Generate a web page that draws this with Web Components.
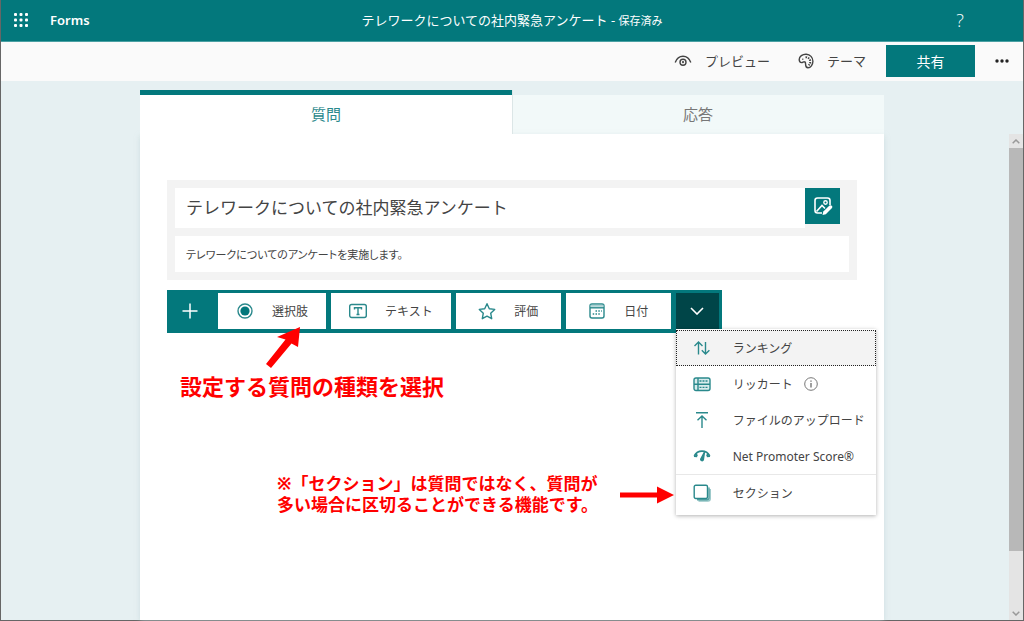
<!DOCTYPE html>
<html lang="ja">
<head>
<meta charset="utf-8">
<title>Forms</title>
<style>
  html, body { margin: 0; }
  body {
    --teal: #03787c;
    --teal-dark: #004548;
    --icon: #2a898c;
    --panel: #f3f3f3;
    --note: #ff0000;
    font-family: "Noto Sans", "Noto Sans CJK JP", sans-serif;
    font-size: 12px;
    color: #444;
  }
</style>
</head>
<body>
<forms-app>
  <app-header slot="header" name="Forms" state="保存済み">テレワークについての社内緊急アンケート</app-header>
  <command-bar slot="commands"></command-bar>
  <form-tabs slot="tabs"></form-tabs>
  <form-title slot="content" heading="テレワークについての社内緊急アンケート" description="テレワークについてのアンケートを実施します。"></form-title>
  <question-bar slot="content">
    <type-button icon="choice">選択肢</type-button>
    <type-button icon="text">テキスト</type-button>
    <type-button icon="star">評価</type-button>
    <type-button icon="date">日付</type-button>
    <type-menu slot="more">
      <menu-item icon="rank" current>ランキング</menu-item>
      <menu-item icon="likert" info>リッカート</menu-item>
      <menu-item icon="upload">ファイルのアップロード</menu-item>
      <menu-item icon="nps">Net Promoter Score®</menu-item>
      <menu-item icon="section" divided>セクション</menu-item>
    </type-menu>
  </question-bar>
  <note-heading slot="content">設定する質問の種類を選択</note-heading>
  <note-pointer slot="content">※「セクション」は質問ではなく、質問が<br>多い場合に区切ることができる機能です。</note-pointer>
  <scroll-bar slot="scroll"></scroll-bar>
</forms-app>

<script>
const svg = (w, h, body) =>
  `<svg width="${w}" height="${h}" viewBox="0 0 ${w} ${h}" fill="none" stroke="currentColor" stroke-width="1.4" aria-hidden="true">${body}</svg>`;

const ICONS = {
  waffle: svg(14, 14, [0, 5.5, 11].map(y => [0, 5.5, 11].map(x =>
    `<rect x="${x}" y="${y}" width="3" height="3" rx="1" fill="currentColor" stroke="none"/>`).join('')).join('')),
  eye: svg(18, 16, '<path d="M1.200 9.500C2.700 5.300 5.500 3.200 9 3.200S15.300 5.300 16.800 9.500"/><circle cx="9" cy="9.200" r="3"/><circle cx="9" cy="9.200" r=".4"/>'),
  palette: svg(16, 16, '<path d="M8.300 1.200C4.500 1 1.200 3.500 1.200 6.600c0 1.900 1 3 2.400 3 1.200 0 1.800-.9 2.700-.8 1.300.1 1.300 1.300 1.300 2.500 0 2 .8 3.500 2.400 3.500 2.600 0 4.900-3.100 4.900-6.500 0-3.900-2.800-6.900-6.600-7.100Z"/><path d="M7.500 4.200c2.500 0 4.200 1.300 4.700 3.600.3 1.700-.3 3.200-1.500 4.400" stroke-width="2" stroke-dasharray="1.500 1"/><path d="M4.300 6.200h1" stroke-width="1.600"/>'),
  dots: svg(14, 6, '<g fill="currentColor" stroke="none"><circle cx="2" cy="3" r="1.700"/><circle cx="7" cy="3" r="1.700"/><circle cx="12" cy="3" r="1.700"/></g>'),
  plus: svg(16, 16, '<path d="M8 .5v15M.5 8h15" stroke-width="1.500"/>'),
  chevron: svg(14, 8, '<path d="M1 1l6 6 6-6" stroke-width="1.600"/>'),
  up: svg(8, 5, '<path d="M.7 4.300L4 1l3.300 3.300" stroke-width="1.500"/>'),
  down: svg(8, 5, '<path d="M.7.700L4 4 7.300.700" stroke-width="1.500"/>'),
  picture: svg(20, 20, '<path d="M9 17H4.500A2.500 2.500 0 0 1 2 14.500v-10A2.500 2.500 0 0 1 4.500 2h10A2.500 2.500 0 0 1 17 4.500V9" stroke-width="1.600"/><circle cx="12.500" cy="6.500" r="1.700"/><path d="M3.500 15.500l5.500-6 3 3" stroke-width="1.600"/><path d="M9.500 19l.8-3.500 6.200-6a1.800 1.800 0 0 1 2.500 2.500l-6.200 6.200Z" fill="currentColor" stroke="none"/>'),
  choice: svg(18, 18, '<circle cx="9" cy="9" r="7"/><circle cx="9" cy="9" r="4.600" fill="#03787c" stroke="none"/>'),
  text: svg(18, 18, '<rect x=".7" y="2.500" width="16.600" height="13" rx="2"/><path d="M5.500 7.500V5.800h7v1.700M9 5.800v6.700M7.500 12.500h3"/>'),
  star: svg(18, 18, '<path d="M9 1.700l2.300 5 5.400.7-4 3.800 1 5.500L9 14.100l-4.700 2.600 1-5.500-4-3.800 5.400-.7Z" stroke-linejoin="round"/>'),
  date: svg(18, 18, '<rect x="2" y="2" width="14" height="14" rx="2"/><path d="M2.500 3.800h13" stroke="#a9d0d2" stroke-width="2"/><path d="M2 5.800h14"/><path d="M7.500 9H9M10.300 9h1.500M13 9h.8M4.700 12h1.500M7.500 12H9M10.300 12h1.500" stroke-width="1.700"/>'),
  rank: svg(18, 18, '<path d="M5.500 15.500V3M1.500 7l4-4 4 4M12.500 3v12M8.800 11.300l3.700 3.700 3.900-3.700"/>'),
  likert: svg(18, 18, '<rect x="1" y="3" width="16" height="12.500" rx="2" fill="#d8eced"/><path d="M1 9.200h16M5 3v12.500"/><path d="M6.500 6h9M6.500 12.400h9" stroke-dasharray="2 1"/>'),
  upload: svg(18, 18, '<path d="M3 1.700h12M9 17V5M4.500 9.300L9 5l4.500 4.300"/>'),
  nps: svg(18, 18, '<path d="M1.300 9C3 5.700 5.700 4.200 9 4.200s6 1.500 7.700 4.800M3 5.800l1 3.500M15 5.800l-1 3.500M1 9.200l3.200.3M17 9.200l-3.200.3" stroke-width="1.700"/><path d="M11.500 5L10.300 13a1.400 1.400 0 0 1-2.600-.8Z" fill="currentColor"/>'),
  section: svg(18, 18, '<rect x="1.200" y="1.200" width="13.300" height="13.300" rx="1.500"/><path d="M16 3.500v10.300a2 2 0 0 1-2 2H4" opacity=".8"/><path d="M17.200 5v9.700a2.300 2.300 0 0 1-2.300 2.300H5.500" opacity=".5"/>'),
  info: svg(14, 14, '<circle cx="7" cy="7" r="6.300" stroke-width="1"/><path d="M7 6v4.500M7 3.500v1.200"/>')
};

const define = (tag, render) => customElements.define(tag, class extends HTMLElement {
  constructor() {
    super();
    const tpl = document.createElement('template');
    tpl.innerHTML = `<style>
      * { box-sizing: border-box; }
      :host { display: block; box-sizing: border-box; }
      svg { display: block; flex: none; }
      button { font: inherit; color: inherit; border: 0; margin: 0; padding: 0; background: none; cursor: pointer; }
    </style>` + render(this);
    this.attachShadow({ mode: 'open' }).append(tpl.content.cloneNode(true));
  }
});

define('forms-app', () => `<style>
    :host { min-height: 100vh; display: flex; flex-direction: column; background: #e6f0f2; border: solid #666; border-width: 0 1px 1px; }
    main { flex: 1; display: grid; grid-template-columns: 1fr minmax(0, 744px) 1fr; grid-template-rows: auto 1fr; padding-top: 9px; }
    .tabs { grid-column: 2; }
    .sheet { grid-column: 2; background: #fff; padding: 46px 27px 0; box-shadow: 0 2px 5px #b7cdd188; }
    .scroll { grid-column: 3; grid-row: 2; justify-self: end; display: flex; }
  </style>
  <slot name="header"></slot><slot name="commands"></slot>
  <main>
    <div class="tabs"><slot name="tabs"></slot></div>
    <div class="sheet"><slot name="content"></slot></div>
    <div class="scroll"><slot name="scroll"></slot></div>
  </main>`);

define('app-header', el => `<style>
    header { display: grid; grid-template-columns: 1fr auto 1fr; align-items: center; height: 42px; padding: 0 13px 2px; background: var(--teal); color: #fff; border-bottom: 1px solid #4aa0a3; }
    .brand { display: flex; align-items: center; gap: 22px; }
    .brand span { font-size: 13px; font-weight: 600; }
    h1 { margin: 0; font-size: 13px; font-weight: 400; white-space: nowrap; }
    small { font-size: 11px; }
    .help { justify-self: end; width: 20px; margin-right: 40px; font-family: "Open Sans", sans-serif; font-size: 18px; font-weight: 300; }
  </style>
  <header>
    <div class="brand"><button aria-label="アプリ起動ツール">${ICONS.waffle}</button><span>${el.getAttribute('name')}</span></div>
    <h1><slot></slot> - <small>${el.getAttribute('state')}</small></h1>
    <button class="help">?</button>
  </header>`);

define('command-bar', () => `<style>
    nav { display: flex; justify-content: flex-end; align-items: center; height: 39px; padding: 0 14px 2px 0; background: #fafafa; font-size: 13px; }
    button { display: flex; align-items: center; gap: 13px; margin-right: 28px; }
    button.theme { margin-right: 20px; }
    button.share { justify-content: center; width: 89px; height: 32px; margin-right: 20px; background: var(--teal); color: #fff; font-size: 14px; }
    button.more { margin: 0; color: #222; }
  </style>
  <nav>
    <button>${ICONS.eye}プレビュー</button>
    <button class="theme">${ICONS.palette}テーマ</button>
    <button class="share">共有</button>
    <button class="more" aria-label="その他">${ICONS.dots}</button>
  </nav>`);

define('form-tabs', () => `<style>
    div { display: grid; grid-template-columns: 1fr 1fr; height: 44px; font-size: 15px; }
    button { padding-bottom: 2px; }
    .on { background: #fff; border-top: 5px solid var(--teal); color: var(--icon); box-shadow: 1px 0 #dce6e7; z-index: 1; }
    .off { margin-top: 5px; background: #f2f9f9; color: #777; }
  </style>
  <div role="tablist">
    <button class="on" role="tab" aria-selected="true">質問</button>
    <button class="off" role="tab" aria-selected="false">応答</button>
  </div>`);

define('form-title', el => `<style>
    form { display: grid; gap: 8px; padding: 8px; background: var(--panel); }
    .row { display: flex; align-items: flex-start; padding-right: 9px; }
    input { display: block; width: 100%; min-width: 0; border: 0; outline: 0; margin: 0; padding: 0 11px; background: #fff; font: inherit; color: inherit; }
    .name { height: 40px; padding-bottom: 4px; font-size: 17px; }
    .about { height: 36px; font-size: 11px; font-feature-settings: "palt"; }
    button { display: grid; place-items: center; flex: none; width: 35px; height: 36px; background: var(--teal); color: #fff; }
  </style>
  <form>
    <div class="row">
      <input class="name" aria-label="フォームのタイトル" value="${el.getAttribute('heading')}">
      <button type="button" aria-label="画像の挿入">${ICONS.picture}</button>
    </div>
    <input class="about" aria-label="説明" value="${el.getAttribute('description')}">
  </form>`);

define('question-bar', () => `<style>
    :host { margin-top: 10px; width: max-content; }
    div { display: flex; gap: 5px; padding: 3px 3px 4px 0; background: var(--teal); }
    .add { display: grid; place-items: center; width: 46px; height: 36px; color: #fff; }
  </style>
  <div><button class="add" aria-label="新規追加">${ICONS.plus}</button><slot></slot><slot name="more"></slot></div>`);

define('type-button', el => `<style>
    button { display: flex; align-items: center; justify-content: center; gap: 18px; min-width: 105px; height: 36px; padding: 0 18px; background: #fff; }
    svg { color: var(--icon); }
  </style>
  <button>${ICONS[el.getAttribute('icon')]}<span><slot></slot></span></button>`);

define('type-menu', () => `<style>
    :host { position: relative; }
    .toggle { display: grid; place-items: center; width: 43px; height: 36px; background: var(--teal-dark); color: #fff; }
    .list { position: absolute; top: 100%; left: 0; z-index: 1; min-width: 200px; padding: 1px 0 4px; background: #fff; box-shadow: 0 1px 4px #0000004d; }
  </style>
  <button class="toggle" aria-haspopup="menu" aria-expanded="true" aria-label="その他の質問の種類">${ICONS.chevron}</button>
  <div class="list" role="menu"><slot></slot></div>`);

define('menu-item', el => `<style>
    :host([divided]) { border-top: 1px solid #e8e8e8; }
    :host([current]) button { background: var(--panel); border: 1px dotted #222; padding-left: 16px; }
    button { display: flex; align-items: center; width: 100%; height: 36px; padding: 0 8px 0 17px; white-space: nowrap; }
    .icon { margin-right: 22px; color: var(--icon); }
    .info { margin-left: 11px; color: #777; }
  </style>
  <button role="menuitem"><span class="icon">${ICONS[el.getAttribute('icon')]}</span><slot></slot>${el.hasAttribute('info') ? `<span class="info">${ICONS.info}</span>` : ''}</button>`);

define('note-heading', () => `<style>
    :host { position: relative; margin: 39px 0 0 13px; color: var(--note); }
    p { margin: 0; font-size: 22px; line-height: 28px; font-weight: 700; }
    svg { position: absolute; left: 85px; bottom: 31px; }
  </style>
  <svg width="36" height="44" viewBox="0 0 36 44" fill="currentColor" aria-hidden="true"><path d="M35 2L33 22 26.500 18.500 6 43 1 39 20.500 14.500 12 12Z"/></svg>
  <p><slot></slot></p>`);

define('note-pointer', () => `<style>
    :host { display: flex; align-items: center; gap: 20px; margin: 73px 0 0 110px; color: var(--note); }
    p { margin: 0; font-size: 17px; line-height: 21px; font-weight: 700; white-space: nowrap; }
  </style>
  <p><slot></slot></p>
  <svg width="56" height="20" viewBox="0 0 56 20" fill="currentColor" aria-hidden="true"><path d="M2 8.500H39V2.500L56 11 39 19.500V13.500H2Z"/></svg>`);

define('scroll-bar', () => `<style>
    :host { width: 14px; display: flex; flex-direction: column; background: #e4e4e4; color: #999; }
    .end { display: grid; place-items: center; height: 14px; flex: none; }
    .track { flex: 1; display: flex; flex-direction: column; }
    .thumb { flex: 0 0 88%; background: #b8b8b8; }
  </style>
  <div class="end">${ICONS.up}</div><div class="track"><div class="thumb"></div></div><div class="end">${ICONS.down}</div>`);
</script>
</body>
</html>
